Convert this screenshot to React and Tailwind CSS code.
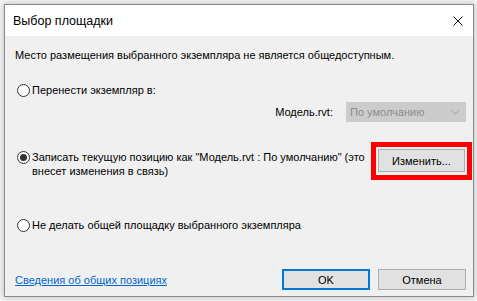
const Radio = ({ checked }) => (
  <span className="flex h-[13px] w-[13px] shrink-0 items-center justify-center rounded-full border border-[#333333] bg-white">
    {checked && <span className="h-[7px] w-[7px] rounded-full bg-[#333333]" />}
  </span>
);

const App = () => {
  return (
    <div
      className="h-[301px] w-[477px] bg-[#f3f3f3] pl-[4px] pt-[4px] text-[11px] text-black"
      style={{ fontFamily: '"Liberation Sans", Arial, sans-serif' }}
    >
      <div className="flex h-[293px] w-[470px] flex-col border border-[#8a8a8a] bg-[#f0f0f0] shadow-[0_0_6px_rgba(0,0,0,0.25)]">
        {/* title bar */}
        <div className="flex h-[31px] items-center justify-between bg-white pl-[8px] pr-[9px]">
          <span className="text-[12.5px] leading-[16px]">Выбор площадки</span>
          <svg width="10" height="10" viewBox="0 0 10 10" className="mr-[1px]">
            <path d="M0.5 0.5 L9.5 9.5 M9.5 0.5 L0.5 9.5" stroke="#111" strokeWidth="1" />
          </svg>
        </div>

        {/* body */}
        <div className="flex flex-1 flex-col pl-[10px] pr-[6px] pt-[11px] pb-[6px]">
          <p className="leading-[16px]">
            Место размещения выбранного экземпляра не является общедоступным.
          </p>

          <label className="mt-[19px] flex h-[16px] items-center gap-[2px] pl-[2px]">
            <Radio />
            <span className="leading-[16px]">Перенести экземпляр в:</span>
          </label>

          <div className="mt-[4px] flex h-[20px] items-center justify-end gap-[13px] pr-[1px]">
            <span className="leading-[16px]">Модель.rvt:</span>
            <div className="flex h-[20px] w-[120px] items-center justify-between border border-[#cccccc] bg-[#cccccc] pl-[3px] pr-[5px] text-[#8c8c8c]">
              <span className="leading-[16px]">По умолчанию</span>
              <svg width="10" height="6" viewBox="0 0 10 6">
                <path d="M0.5 0.5 L5 5 L9.5 0.5" fill="none" stroke="#a6a6a6" strokeWidth="1" />
              </svg>
            </div>
          </div>

          <div className="mt-[27px] flex items-start">
            <label className="flex w-[356px] items-start gap-[2px] pl-[2px] pt-[1px]">
              <span className="mt-[1px]">
                <Radio checked />
              </span>
              <span className="whitespace-nowrap leading-[14px]">
                Записать текущую позицию как "Модель.rvt : По умолчанию" (это
                <br />
                внесет изменения в связь)
              </span>
            </label>
            <div className="relative ml-[7px]">
              <button
                type="button"
                className="h-[23px] w-[87px] border border-[#adadad] bg-[#e1e1e1] leading-[16px]"
              >
                Изменить...
              </button>
              <div className="pointer-events-none absolute -bottom-[8px] -left-[7px] -right-[7px] -top-[7px] border-[5px] border-[#ff0000]" />
            </div>
          </div>

          <label className="mt-[39px] flex h-[16px] items-center gap-[2px] pl-[2px]">
            <Radio />
            <span className="leading-[16px]">Не делать общей площадку выбранного экземпляра</span>
          </label>

          <div className="mt-auto flex items-center justify-between pr-[1px]">
            <a href="#" className="leading-[16px] text-[#0066cc] underline">
              Сведения об общих позициях
            </a>
            <div className="flex gap-[8px]">
              <button
                type="button"
                className="h-[21px] w-[88px] border-2 border-[#0078d7] bg-[#e1e1e1] leading-[16px]"
              >
                OK
              </button>
              <button
                type="button"
                className="h-[21px] w-[88px] border border-[#adadad] bg-[#e1e1e1] leading-[16px]"
              >
                Отмена
              </button>
            </div>
          </div>
        </div>
      </div>
    </div>
  );
};

export default App;
